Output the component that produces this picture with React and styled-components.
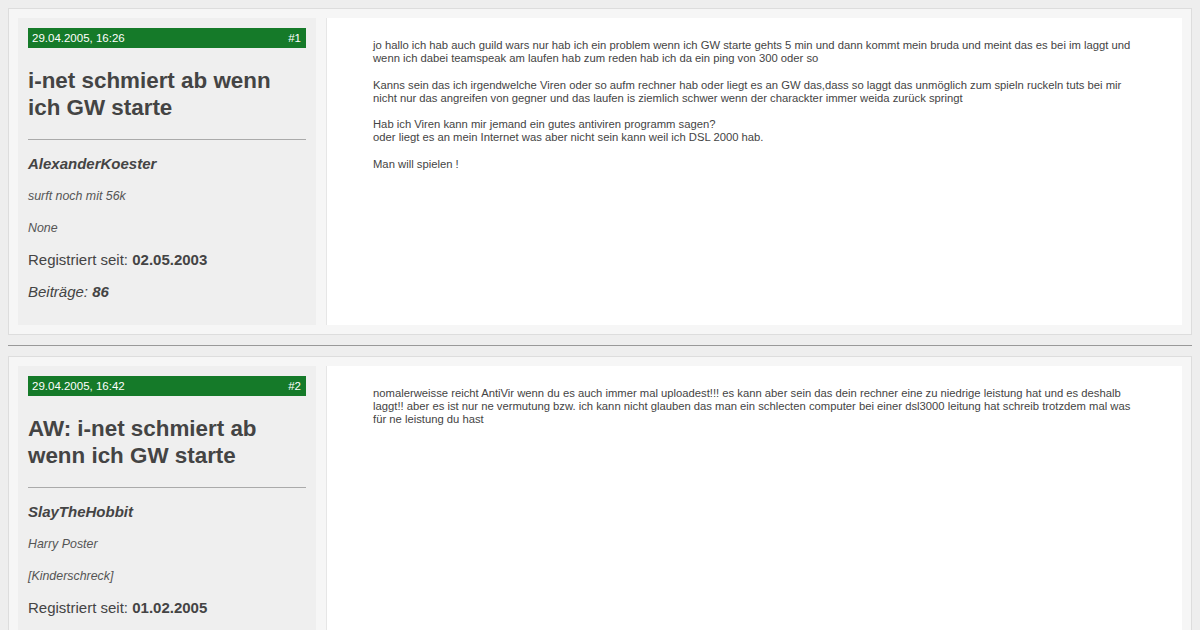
import React from "react";
import styled, { createGlobalStyle } from "styled-components";

const GlobalStyle = createGlobalStyle`
  body {
    margin: 8px;
    background: #eeeeee;
    font-family: "Liberation Sans", Arial, sans-serif;
    color: #444;
  }
`;

const posts = [
  {
    id: 1,
    date: "29.04.2005, 16:26",
    title: "i-net schmiert ab wenn ich GW starte",
    user: "AlexanderKoester",
    rank: "surft noch mit 56k",
    status: "None",
    registered: "02.05.2003",
    count: 86,
    body: [
      [
        "jo hallo ich hab auch guild wars nur hab ich ein problem wenn ich GW starte gehts 5 min und dann kommt mein bruda und meint das es bei im laggt und wenn ich dabei teamspeak am laufen hab zum reden hab ich da ein ping von 300 oder so",
      ],
      [
        "Kanns sein das ich irgendwelche Viren oder so aufm rechner hab oder liegt es an GW das,dass so laggt das unmöglich zum spieln ruckeln tuts bei mir nicht nur das angreifen von gegner und das laufen is ziemlich schwer wenn der charackter immer weida zurück springt",
      ],
      [
        "Hab ich Viren kann mir jemand ein gutes antiviren programm sagen?",
        "oder liegt es an mein Internet was aber nicht sein kann weil ich DSL 2000 hab.",
      ],
      ["Man will spielen !"],
    ],
  },
  {
    id: 2,
    date: "29.04.2005, 16:42",
    title: "AW: i-net schmiert ab wenn ich GW starte",
    user: "SlayTheHobbit",
    rank: "Harry Poster",
    status: "[Kinderschreck]",
    registered: "01.02.2005",
    count: 12,
    body: [
      [
        "nomalerweisse reicht AntiVir wenn du es auch immer mal uploadest!!! es kann aber sein das dein rechner eine zu niedrige leistung hat und es deshalb laggt!! aber es ist nur ne vermutung bzw. ich kann nicht glauben das man ein schlecten computer bei einer dsl3000 leitung hat schreib trotzdem mal was für ne leistung du hast",
      ],
    ],
  },
];

const Post = styled.div`
  display: grid;
  grid-template-columns: 298px 1fr;
  gap: 10px;
  padding: 9px;
  background: #f6f6f6;
  border: 1px solid #dddddd;
`;

const Sidebar = styled.div`
  background: #efefef;
  padding: 10px 10px 24px;
  display: flex;
  flex-direction: column;
`;

const DateBar = styled.div`
  display: flex;
  justify-content: space-between;
  align-items: center;
  height: 20px;
  padding: 0 5px 0 4px;
  background: #157a29;
  color: #ffffff;
  font-size: 11.5px;
`;

const Title = styled.h2`
  margin: 19px 0 0;
  font-size: 22.4px;
  line-height: 27px;
  font-weight: bold;
  color: #444;
`;

const Rule = styled.hr`
  margin: 18px 0 0;
  border: 0;
  border-top: 1px solid #aaaaaa;
  height: 0;
`;

const Meta = styled.div`
  display: flex;
  flex-direction: column;
  gap: 14px;
  margin-top: 15px;
`;

const Line = styled.div`
  line-height: 18px;
  font-size: ${(p) => (p.$small ? "12.4px" : "15px")};
  font-style: ${(p) => (p.$italic ? "italic" : "normal")};
  font-weight: ${(p) => (p.$bold ? "bold" : "normal")};
  color: ${(p) => (p.$small ? "#555" : "#444")};
`;

const Content = styled.div`
  background: #ffffff;
  border-left: 1px solid #e6e6e6;
  padding: 21px 51px 20px 46px;
  font-size: 11.25px;
  line-height: 13.1px;
  color: #444;
`;

const Paragraph = styled.p`
  margin: 0 0 13.4px;
`;

const Separator = styled.hr`
  margin: 10px 0;
  border: 0;
  border-top: 1px solid #999999;
  height: 0;
`;

function PostCard({ post }) {
  return (
    <Post>
      <Sidebar>
        <DateBar>
          <span>{post.date}</span>
          <span>#{post.id}</span>
        </DateBar>
        <Title>{post.title}</Title>
        <Rule />
        <Meta>
          <Line $bold $italic>
            {post.user}
          </Line>
          <Line $small $italic>
            {post.rank}
          </Line>
          <Line $small $italic>
            {post.status}
          </Line>
          <Line>
            Registriert seit: <b>{post.registered}</b>
          </Line>
          <Line $italic>
            Beiträge: <b>{post.count}</b>
          </Line>
        </Meta>
      </Sidebar>
      <Content>
        {post.body.map((para, i) => (
          <Paragraph key={i}>
            {para.map((l, j) => (
              <React.Fragment key={j}>
                {j > 0 && <br />}
                {l}
              </React.Fragment>
            ))}
          </Paragraph>
        ))}
      </Content>
    </Post>
  );
}

export default function App() {
  return (
    <>
      <GlobalStyle />
      {posts.map((post, i) => (
        <React.Fragment key={post.id}>
          {i > 0 && <Separator />}
          <PostCard post={post} />
        </React.Fragment>
      ))}
    </>
  );
}
